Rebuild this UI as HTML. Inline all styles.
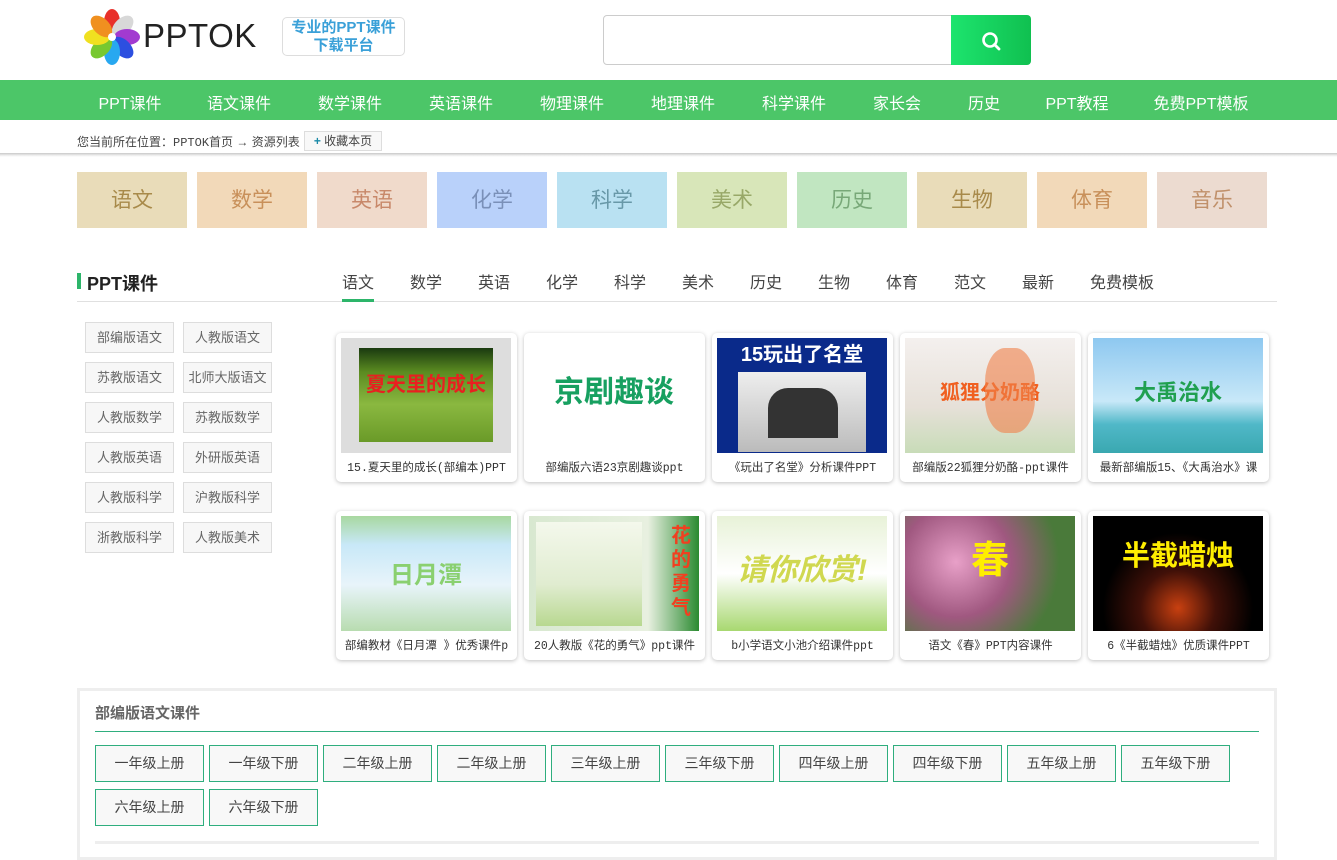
<!DOCTYPE html>
<html><head><meta charset="utf-8"><style>
*{margin:0;padding:0;box-sizing:border-box}
body{width:1337px;height:858px;overflow:hidden;background:#fff;font-family:"Liberation Sans","Noto Sans CJK SC",sans-serif;position:relative;color:#333}
.a{position:absolute}
.nav{top:80px;left:0;width:1337px;height:40px;background:#4cc668}
.nav span{position:absolute;top:10px;color:#fff;font-size:16px;transform:translateX(-50%);white-space:nowrap}
.tile{position:absolute;top:172px;width:110px;height:56px;font-size:21px;text-align:center;line-height:58px}
.tab{position:absolute;top:269px;font-size:16px;color:#444;transform:translateX(-50%)}
.lb{position:absolute;width:89px;height:31px;border:1px solid #ddd;background:#f7f7f7;font-size:13px;color:#666;text-align:center;line-height:29px}
.card{position:absolute;width:181px;height:149px;background:#fff;border-radius:5px;box-shadow:0 1px 4px rgba(0,0,0,.25)}
.card .im{position:absolute;left:5px;top:5px;width:170px;height:115px;overflow:hidden;text-align:center;font-weight:bold}
.card .cp{position:absolute;left:0;top:126px;width:181px;text-align:center;font-size:11.5px;color:#333;white-space:nowrap;overflow:hidden;font-family:"Liberation Mono","Noto Sans CJK SC",monospace}
.gb{position:absolute;width:109px;height:37px;border:1px solid #2fae7e;background:#f8f8f8;font-size:14px;color:#444;text-align:center;line-height:35px}
</style></head><body>
<svg class="a" style="left:84px;top:9px" width="56" height="56" viewBox="-28 -28 56 56">
<g>
<ellipse cx="0" cy="-15" rx="8" ry="13" fill="#e8302a"/>
<ellipse cx="0" cy="-15" rx="8" ry="13" fill="#d8d8d8" transform="rotate(45)"/>
<ellipse cx="0" cy="-15" rx="8" ry="13" fill="#a23ad0" transform="rotate(90)"/>
<ellipse cx="0" cy="-15" rx="8" ry="13" fill="#2c4fe0" transform="rotate(135)"/>
<ellipse cx="0" cy="-15" rx="8" ry="13" fill="#28a8f0" transform="rotate(180)"/>
<ellipse cx="0" cy="-15" rx="8" ry="13" fill="#78c830" transform="rotate(225)"/>
<ellipse cx="0" cy="-15" rx="8" ry="13" fill="#f0e020" transform="rotate(270)"/>
<ellipse cx="0" cy="-15" rx="8" ry="13" fill="#f09020" transform="rotate(315)"/>
<circle r="4" fill="#fff"/></g></svg>
<div class="a" style="left:143px;top:17px;font-size:33px;color:#222;letter-spacing:0.5px">PPTOK</div>
<div class="a" style="left:282px;top:17px;width:123px;height:39px;border:1px solid #ddd;border-radius:5px;text-align:center;color:#3aa0d8;font-size:15px;line-height:18px;font-weight:bold;padding-top:1px">专业的PPT课件<br>下载平台</div>
<div class="a" style="left:603px;top:15px;width:350px;height:50px;border:1px solid #ccc;border-radius:4px 0 0 4px"></div>
<div class="a" style="left:951px;top:15px;width:80px;height:50px;background:linear-gradient(90deg,#1de46e,#10c050);border-radius:0 4px 4px 0"></div>
<svg class="a" style="left:980px;top:30px" width="22" height="22" viewBox="0 0 22 22"><circle cx="10" cy="10" r="6.5" fill="none" stroke="#fff" stroke-width="2.6"/><path d="M14.5 14.5 L19 19" stroke="#fff" stroke-width="2.8" stroke-linecap="round"/></svg>
<div class="a nav">
<span style="left:130px">PPT课件</span><span style="left:239px">语文课件</span><span style="left:350px">数学课件</span><span style="left:461px">英语课件</span><span style="left:572px">物理课件</span><span style="left:683px">地理课件</span><span style="left:794px">科学课件</span><span style="left:897px">家长会</span><span style="left:984px">历史</span><span style="left:1077px">PPT教程</span><span style="left:1201px">免费PPT模板</span>
</div>
<div class="a" style="left:0;top:153px;width:1337px;height:4px;background:linear-gradient(#c8c8c8,#eee 60%,#fff)"></div>
<div class="a" style="left:77px;top:133px;font-size:12px;color:#444">您当前所在位置：<span style="font-family:'Liberation Mono',monospace">PPTOK</span>首页 → 资源列表</div>
<div class="a" style="left:304px;top:131px;width:78px;height:20px;border:1px solid #ddd;background:#f8f8f8;font-size:12px;line-height:18px;text-align:center;color:#444"><b style="color:#1a8aa8">+</b> 收藏本页</div>
<div class="tile" style="left:77px;background:#e9dcb9;color:#a88a4a">语文</div>
<div class="tile" style="left:197px;background:#f2d9b9;color:#c8905a">数学</div>
<div class="tile" style="left:317px;background:#f0dacb;color:#c8886a">英语</div>
<div class="tile" style="left:437px;background:#b9d1fa;color:#7a90b8">化学</div>
<div class="tile" style="left:557px;background:#b9e1f2;color:#6898a8">科学</div>
<div class="tile" style="left:677px;background:#d8e6b9;color:#98a868">美术</div>
<div class="tile" style="left:797px;background:#c1e6c1;color:#78a878">历史</div>
<div class="tile" style="left:917px;background:#e9dcb9;color:#a88a4a">生物</div>
<div class="tile" style="left:1037px;background:#f2d9b9;color:#c8905a">体育</div>
<div class="tile" style="left:1157px;background:#ecdbd0;color:#c0906a">音乐</div>
<div class="a" style="left:77px;top:273px;width:4px;height:16px;background:#2db56a"></div>
<div class="a" style="left:87px;top:270px;font-size:18px;font-weight:bold;color:#222">PPT课件</div>
<div class="a" style="left:77px;top:301px;width:1200px;height:1px;background:#e0e0e0"></div>
<div class="a" style="left:342px;top:299px;width:32px;height:3px;background:#2db56a"></div>
<span class="tab" style="left:358px">语文</span><span class="tab" style="left:426px">数学</span><span class="tab" style="left:494px">英语</span><span class="tab" style="left:562px">化学</span><span class="tab" style="left:630px">科学</span><span class="tab" style="left:698px">美术</span><span class="tab" style="left:766px">历史</span><span class="tab" style="left:834px">生物</span><span class="tab" style="left:902px">体育</span><span class="tab" style="left:970px">范文</span><span class="tab" style="left:1038px">最新</span><span class="tab" style="left:1122px">免费模板</span>
<div class="lb" style="left:85px;top:322px">部编版语文</div><div class="lb" style="left:183px;top:322px">人教版语文</div>
<div class="lb" style="left:85px;top:362px">苏教版语文</div><div class="lb" style="left:183px;top:362px">北师大版语文</div>
<div class="lb" style="left:85px;top:402px">人教版数学</div><div class="lb" style="left:183px;top:402px">苏教版数学</div>
<div class="lb" style="left:85px;top:442px">人教版英语</div><div class="lb" style="left:183px;top:442px">外研版英语</div>
<div class="lb" style="left:85px;top:482px">人教版科学</div><div class="lb" style="left:183px;top:482px">沪教版科学</div>
<div class="lb" style="left:85px;top:522px">浙教版科学</div><div class="lb" style="left:183px;top:522px">人教版美术</div>

<div class="card" style="left:336px;top:333px"><div class="im" style="background:linear-gradient(#ddd,#ddd)"><div style="position:absolute;left:18px;top:10px;width:134px;height:94px;background:linear-gradient(#1a3a10,#5a8a20 25%,#8ab840 60%,#6a9a28);color:#e82020;font-size:20px;line-height:75px">夏天里的成长</div></div><div class="cp">15.夏天里的成长(部编本)PPT</div></div>
<div class="card" style="left:524px;top:333px"><div class="im" style="background:#fff;color:#17a060;font-size:30px;line-height:110px">京剧趣谈</div><div class="cp">部编版六语23京剧趣谈ppt</div></div>
<div class="card" style="left:712px;top:333px"><div class="im" style="background:#0a2a8a;color:#fff;font-size:20px;line-height:34px">15玩出了名堂<div style="margin:0 auto;width:128px;height:80px;background:linear-gradient(#eee,#bbb);position:relative"><div style="position:absolute;left:30px;top:16px;width:70px;height:50px;background:#333;border-radius:20px 20px 0 0"></div></div></div><div class="cp">《玩出了名堂》分析课件PPT</div></div>
<div class="card" style="left:900px;top:333px"><div class="im" style="background:linear-gradient(#f4f0ee,#e6e0d8 60%,#c8dcb8);color:#f06020;font-size:20px;line-height:110px">狐狸分奶酪<div style="position:absolute;left:80px;top:10px;width:50px;height:85px;background:#f0804a;border-radius:40%;opacity:.6"></div></div><div class="cp">部编版22狐狸分奶酪-ppt课件</div></div>
<div class="card" style="left:1088px;top:333px"><div class="im" style="background:linear-gradient(#8ec8f0,#c8e8f8 55%,#50b8c8 75%,#3aa8b0);color:#20a050;font-size:22px;line-height:110px">大禹治水</div><div class="cp">最新部编版15、《大禹治水》课</div></div>

<div class="card" style="left:336px;top:511px"><div class="im" style="background:linear-gradient(#a8d8a0 0%,#c8e8f8 25%,#e8f4fa 60%,#b8dcb0);color:#8ad070;font-size:24px;line-height:120px">日月潭</div><div class="cp">部编教材《日月潭 》优秀课件p</div></div>
<div class="card" style="left:524px;top:511px"><div class="im" style="background:linear-gradient(90deg,#d8e8d0,#e8f0e0 70%,#2a8a30)"><div style="position:absolute;left:7px;top:6px;width:106px;height:104px;background:linear-gradient(#f4f8ec,#e0ecd0 60%,#b8d890)"></div><div style="position:absolute;right:6px;top:8px;width:24px;color:#f04020;font-size:20px;line-height:24px">花的勇气</div></div><div class="cp">20人教版《花的勇气》ppt课件</div></div>
<div class="card" style="left:712px;top:511px"><div class="im" style="background:linear-gradient(#e8f2d8,#fff 50%,#a8d870);color:#d0d850;font-size:30px;line-height:110px;font-style:italic">请你欣赏!</div><div class="cp">b小学语文小池介绍课件ppt</div></div>
<div class="card" style="left:900px;top:511px"><div class="im" style="background:radial-gradient(circle at 30% 40%,#e8a0c8,#a05880 40%,#4a7a3a 75%);color:#ffee00;font-size:38px;line-height:90px">春</div><div class="cp">语文《春》PPT内容课件</div></div>
<div class="card" style="left:1088px;top:511px"><div class="im" style="background:radial-gradient(circle at 50% 80%,#c84010,#401008 30%,#000 60%);color:#ffee00;font-size:28px;line-height:80px">半截蜡烛</div><div class="cp">6《半截蜡烛》优质课件PPT</div></div>

<div class="a" style="left:77px;top:688px;width:1200px;height:172px;border:3px solid #eee"></div>
<div class="a" style="left:95px;top:702px;font-size:15px;font-weight:bold;color:#666">部编版语文课件</div>
<div class="a" style="left:95px;top:731px;width:1164px;height:1px;background:#2fae7e"></div>
<div class="gb" style="left:95px;top:745px">一年级上册</div><div class="gb" style="left:209px;top:745px">一年级下册</div><div class="gb" style="left:323px;top:745px">二年级上册</div><div class="gb" style="left:437px;top:745px">二年级上册</div><div class="gb" style="left:551px;top:745px">三年级上册</div><div class="gb" style="left:665px;top:745px">三年级下册</div><div class="gb" style="left:779px;top:745px">四年级上册</div><div class="gb" style="left:893px;top:745px">四年级下册</div><div class="gb" style="left:1007px;top:745px">五年级上册</div><div class="gb" style="left:1121px;top:745px">五年级下册</div>
<div class="gb" style="left:95px;top:789px">六年级上册</div><div class="gb" style="left:209px;top:789px">六年级下册</div>
<div class="a" style="left:95px;top:841px;width:1164px;height:3px;background:#eee"></div>
</body></html>
